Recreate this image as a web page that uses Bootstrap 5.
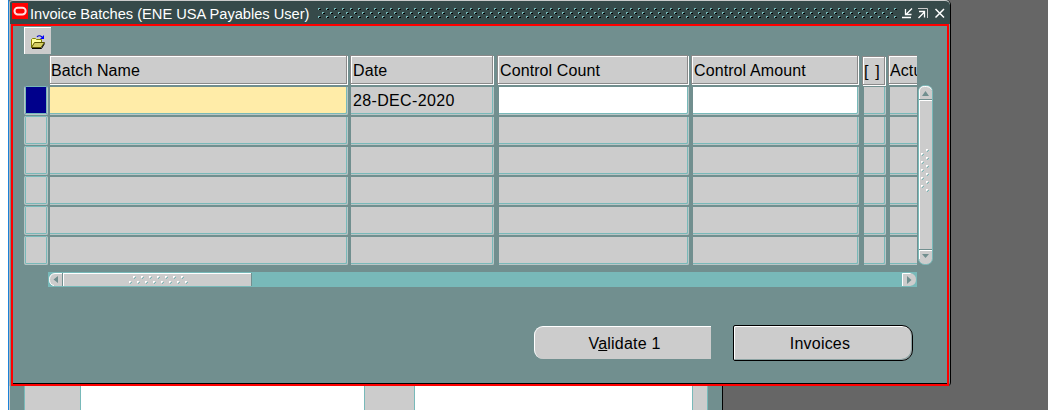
<!DOCTYPE html>
<html lang="en">
<head>
<meta charset="utf-8">
<meta name="viewport" content="width=device-width, initial-scale=1">
<title>Invoice Batches</title>
<link rel="stylesheet" href="https://cdn.jsdelivr.net/npm/bootstrap@5.3.0/dist/css/bootstrap.min.css">
<style>
:root{--teal:#78b9b9;--panel:#718f8f;--face:#ccc;--shade:#8a8a8a}
body{width:1048px;height:410px;background:#666;font:16px/1 "Liberation Sans",Arial,sans-serif;color:#000}
svg{display:block;flex:none}
.edge{width:9px;background:#fff;border-right:1px solid #1c82d8}
.win{width:942px;height:386px;border-left:1px solid #b5b5b5;border-right:1px solid #000;border-radius:3px 5px 4px 0;background:var(--panel)}
.title-row{height:24px;background:#364a4a;border-top:1px solid var(--face);border-radius:3px 5px 0 0;color:#fff;font-size:14.67px;padding-left:2px}
.logo{margin-top:2px}
.caption-text{margin:6px 0 0 2px;width:287px;white-space:nowrap;letter-spacing:-.02px}
.inner{margin:0 1px;width:938px;height:362px;border:2px solid red;background:var(--panel);box-shadow:inset 0 -1px #000;padding-left:11px}
.tool{width:27px;height:27px;background:var(--face);border:1px solid #fff;border-width:1px 0 0 1px;margin:1px 0;padding:0}
.sheet{width:893px;height:210px}
.fld{flex:none;display:flex;flex-direction:column;padding-right:2px;overflow:hidden}
.fld>*{flex:none}
.f-sel{width:25px;padding:30px 1px 0 0}.f-name{width:301px}.f-date{width:147px;padding-right:3px}.f-count{width:194px}.f-amt{width:171px;padding-right:3px}.f-flag{width:26px}.f-act{width:29px;padding-right:0}
.hd{height:29px;margin:0 1px 1px 0;background:var(--face);border:1px solid var(--shade);box-shadow:inset 1px 1px #fff,1px 1px #fff;padding:7px 0 0 1px;white-space:nowrap;overflow:hidden;letter-spacing:.1px}
.f-date .hd,.f-count .hd,.f-amt .hd{padding-left:2px}
.f-flag .hd{margin-top:1px;margin-bottom:0;letter-spacing:1.2px}
.f-act .hd{margin-right:0;border-right:0}
.cellbox{height:28px;margin:2px 0 0 2px;background:var(--face);border:1px solid #b9c6c6;border-width:0 1px 1px 0;border-radius:0 0 2px 0;box-shadow:inset -1px -1px var(--teal);padding:6px 0 0;white-space:nowrap}
.f-name .cellbox,.f-date .cellbox{margin-left:1px}
.f-date .cellbox{padding-left:2px;letter-spacing:.35px}
.f-act .cellbox{margin-right:-4px}
.f-sel .selbox{height:29px;margin-top:1px;background:var(--face);border:1px solid #b9c6c6;border-width:0 1px 1px 1px;border-radius:2px;box-shadow:inset 0 0 0 1px var(--teal)}
.f-sel .current{background:#00008b}
.cellbox.open{background:#fff}.cellbox.required{background:#ffeca8}
.vbar{margin:30px 0 0 1px}
.hbar{margin:7px 0 0 24px}
.actions{margin:37px 0 0 510px;gap:22px}
.act-btn{height:33px;width:177px;margin-top:2px;padding:2px 0 0 3px;font-size:16px;line-height:16px;letter-spacing:.2px;background:var(--face);border:0;border-top:1px solid #fff;border-left:1px solid #fff;border-radius:9px 0 0 9px;color:#000}
.act-btn.main{width:180px;height:36px;margin-top:1px;padding:2px 6px 0 0;border:1px solid #000;border-radius:2px 11px 11px 2px;box-shadow:inset 1px 1px #fff,inset -1px -1px #8da3a3}
.under{width:714px;height:24px;border-left:1px solid var(--face);border-right:1px solid #000;background:var(--panel);padding-left:14px}
.u-gray{background:var(--face);border:1px solid var(--teal);border-width:0 1px}
.u-white{background:#fff}
</style>
</head>
<body class="d-flex m-0 overflow-hidden">
<div class="edge flex-shrink-0"></div>
<div>
<main class="win">
  <header class="title-row d-flex">
    <svg class="logo" width="16" height="16"><path fill="red" d="M0 0h16v16H0z"/><rect x="2.5" y="4.8" width="11.2" height="6.6" rx="3.3" fill="none" stroke="#ffdede" stroke-width="2"/></svg>
    <span class="caption-text">Invoice Batches (ENE USA Payables User)</span>
    <svg width="580" height="23" shape-rendering="crispEdges">
      <defs><pattern id="grip" width="8" height="8" patternUnits="userSpaceOnUse" y="7">
        <path fill="#78b9b9" d="M1 0h2v1h-1v1h-1zM5 4h2v1h-1v1h-1z"/><path fill="#000" d="M3 1h1v1h-1zM2 1h1v1h-1zM7 5h1v1h-1zM6 5h1v1h-1z"/></pattern></defs>
      <path fill="url(#grip)" d="M0 7h580v11H0z"/>
    </svg>
    <svg width="51" height="23" fill="none" stroke="#fff"><path stroke-width="1.5" d="M5 16.500h9"/><path stroke-width="1.3" d="M15 7.5l-5.500 5.500M8.500 8v5.500h6"/><path stroke="#ccc" d="M21 7.500h9.500V17"/><path stroke-width="1.3" d="M21.500 17l6-6M22 10.500h5.500v6"/><path stroke-width="1.5" d="M38.500 8l8.500 8.500m0-8.500l-8.500 8.500"/></svg>
  </header>
  <section class="inner">
    <div class="d-flex"><button class="tool d-block rounded-0" aria-label="Open">
      <svg width="25" height="25" viewBox="0 0 25 25"><path fill="#ffff9c" stroke="#808000" d="M6.500 18.500v-8l1-1h3l1 1h5v3"/><path fill="#d6cf63" stroke="#5c5600" d="M6.500 18.500l3-5h10l-3.500 5z"/><path d="M7 19.500h9.500l3-5" fill="none" stroke="#000"/><path d="M12 8q2-2.500 5 0" fill="none" stroke="#0000d0" stroke-width="1.200"/><path fill="#00f" d="M19 6v4h-4z"/></svg>
    </button></div>
    <div class="d-flex">
      <div class="sheet d-flex flex-shrink-0">
        <div class="fld f-sel"><div class="selbox current"></div><div class="selbox"></div><div class="selbox"></div><div class="selbox"></div><div class="selbox"></div><div class="selbox"></div></div>
        <div class="fld f-name"><div class="hd">Batch Name</div><div class="cellbox required"></div><div class="cellbox"></div><div class="cellbox"></div><div class="cellbox"></div><div class="cellbox"></div><div class="cellbox"></div></div>
        <div class="fld f-date"><div class="hd">Date</div><div class="cellbox">28-DEC-2020</div><div class="cellbox"></div><div class="cellbox"></div><div class="cellbox"></div><div class="cellbox"></div><div class="cellbox"></div></div>
        <div class="fld f-count"><div class="hd">Control Count</div><div class="cellbox open"></div><div class="cellbox"></div><div class="cellbox"></div><div class="cellbox"></div><div class="cellbox"></div><div class="cellbox"></div></div>
        <div class="fld f-amt"><div class="hd">Control Amount</div><div class="cellbox open"></div><div class="cellbox"></div><div class="cellbox"></div><div class="cellbox"></div><div class="cellbox"></div><div class="cellbox"></div></div>
        <div class="fld f-flag"><div class="hd">[ ]</div><div class="cellbox"></div><div class="cellbox"></div><div class="cellbox"></div><div class="cellbox"></div><div class="cellbox"></div><div class="cellbox"></div></div>
        <div class="fld f-act"><div class="hd">Actu</div><div class="cellbox"></div><div class="cellbox"></div><div class="cellbox"></div><div class="cellbox"></div><div class="cellbox"></div><div class="cellbox"></div></div>
      </div>
      <svg class="vbar" width="15" height="180"><rect x=".5" y=".5" width="14" height="179" rx="6" fill="#ccc" stroke="#78b9b9"/><path d="M1.500 174V6q0-4.500 5-4.500h2q4 0 5 3" fill="none" stroke="#fff"/><path stroke="#718f8f" d="M1 14.500h13M1 164.500h13"/><path stroke="#fff" d="M1 15.500h13M1 165.500h13"/><path fill="#718f8f" d="M4 11l3.500-5L11 11zM4 169h7l-3.500 4z"/>
        <defs><pattern id="vdots" width="11" height="8" patternUnits="userSpaceOnUse" x="3" y="64"><path fill="#fff" d="M5 0h2v1h-1v1h-1zM0 4h2v1h-1v1h-1z"/><path fill="#78b9b9" d="M7 1h1v1h-1v1h-1v-1h1zM2 5h1v1h-1v1h-1v-1h1z"/></pattern></defs><path fill="url(#vdots)" d="M3 64h9v43H3z"/></svg>
    </div>
    <svg class="hbar" width="869" height="15"><path fill="#78b9b9" d="M0 0h869v15H0z"/><path fill="#ccc" d="M14 1H7Q1 2 1 7.500T7 14h7zM15 1h188v13H15zM854 1h8q6 1 6 6.500t-6 6.500h-8z"/><path fill="none" stroke="#fff" d="M203 1.500H7Q1.500 2 1.500 7.500T6 13.500M15.500 1v13M854.500 14V1.500h8"/><path stroke="#718f8f" d="M14.500 1v13M203.500 1v13"/><path fill="#718f8f" d="M10 4v7L5.500 7.500zM859 4v8l4.500-4z"/>
      <defs><pattern id="hdots" width="8" height="11" patternUnits="userSpaceOnUse" x="81" y="4"><path fill="#fff" d="M4 0h2v1h-1v1h-1zM0 5h2v1h-1v1h-1z"/><path fill="#78b9b9" d="M6 1h1v1h-1v1h-1v-1h1zM2 6h1v1h-1v1h-1v-1h1z"/></pattern></defs><path fill="url(#hdots)" d="M81 4h60v9H81z"/></svg>
    <div class="actions d-flex"><button class="act-btn">V<u>a</u>lidate 1</button><button class="act-btn main">Invoices</button></div>
  </section>
</main>
<div class="under d-flex"><div class="u-gray" style="width:57px"></div><div class="u-white" style="width:283px"></div><div class="u-gray" style="width:51px"></div><div class="u-white" style="width:277px"></div><div class="u-gray" style="width:16px"></div></div>
</div>
<script src="https://cdn.jsdelivr.net/npm/bootstrap@5.3.0/dist/js/bootstrap.bundle.min.js"></script>
</body>
</html>
